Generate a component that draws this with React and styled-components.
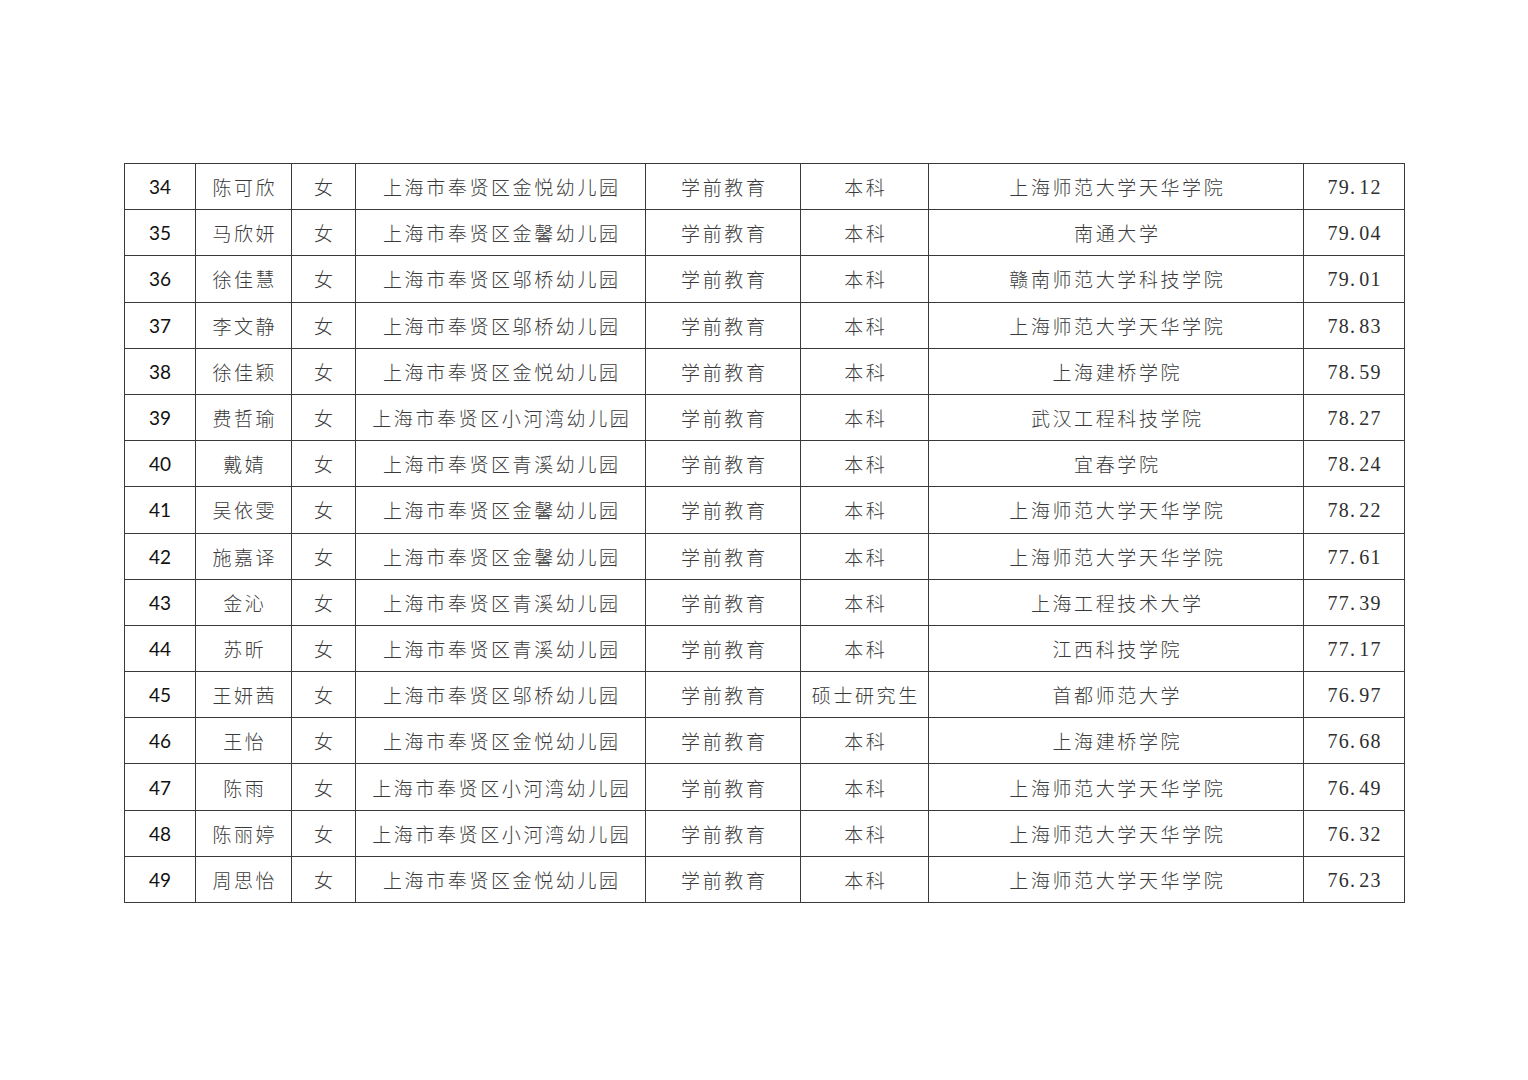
import React from "react";
import styled, { createGlobalStyle } from "styled-components";

const GlobalStyle = createGlobalStyle`
  html, body {
    margin: 0;
    padding: 0;
    background: #ffffff;
  }
`;

const rows = [
  ["34", "陈可欣", "女", "上海市奉贤区金悦幼儿园", "学前教育", "本科", "上海师范大学天华学院", "79.12"],
  ["35", "马欣妍", "女", "上海市奉贤区金馨幼儿园", "学前教育", "本科", "南通大学", "79.04"],
  ["36", "徐佳慧", "女", "上海市奉贤区邬桥幼儿园", "学前教育", "本科", "赣南师范大学科技学院", "79.01"],
  ["37", "李文静", "女", "上海市奉贤区邬桥幼儿园", "学前教育", "本科", "上海师范大学天华学院", "78.83"],
  ["38", "徐佳颖", "女", "上海市奉贤区金悦幼儿园", "学前教育", "本科", "上海建桥学院", "78.59"],
  ["39", "费哲瑜", "女", "上海市奉贤区小河湾幼儿园", "学前教育", "本科", "武汉工程科技学院", "78.27"],
  ["40", "戴婧", "女", "上海市奉贤区青溪幼儿园", "学前教育", "本科", "宜春学院", "78.24"],
  ["41", "吴依雯", "女", "上海市奉贤区金馨幼儿园", "学前教育", "本科", "上海师范大学天华学院", "78.22"],
  ["42", "施嘉译", "女", "上海市奉贤区金馨幼儿园", "学前教育", "本科", "上海师范大学天华学院", "77.61"],
  ["43", "金沁", "女", "上海市奉贤区青溪幼儿园", "学前教育", "本科", "上海工程技术大学", "77.39"],
  ["44", "苏昕", "女", "上海市奉贤区青溪幼儿园", "学前教育", "本科", "江西科技学院", "77.17"],
  ["45", "王妍茜", "女", "上海市奉贤区邬桥幼儿园", "学前教育", "硕士研究生", "首都师范大学", "76.97"],
  ["46", "王怡", "女", "上海市奉贤区金悦幼儿园", "学前教育", "本科", "上海建桥学院", "76.68"],
  ["47", "陈雨", "女", "上海市奉贤区小河湾幼儿园", "学前教育", "本科", "上海师范大学天华学院", "76.49"],
  ["48", "陈丽婷", "女", "上海市奉贤区小河湾幼儿园", "学前教育", "本科", "上海师范大学天华学院", "76.32"],
  ["49", "周思怡", "女", "上海市奉贤区金悦幼儿园", "学前教育", "本科", "上海师范大学天华学院", "76.23"],
];

const widths = [71, 96, 64, 290, 155, 128, 375, 101];

const Page = styled.div`
  width: 1528px;
  height: 1080px;
  box-sizing: border-box;
  padding: 163px 0 0 124px;
  background: #fff;
`;

const Table = styled.table`
  border-collapse: collapse;
  table-layout: fixed;
  width: 1281px;
  border: 1.3px solid #3a3a3a;
`;

const Row = styled.tr`
  height: 46.2px;
`;

const Cell = styled.td`
  border: 1.3px solid #3a3a3a;
  padding: 0;
  text-align: center;
  vertical-align: middle;
  white-space: nowrap;
  color: #3a3a3a;
  font-family: "Noto Sans CJK SC", "Noto Sans CJK JP", sans-serif;
  font-weight: 300;
  font-size: 19px;
  letter-spacing: 2.6px;
  text-indent: 2.6px;
`;

const IndexCell = styled(Cell)`
  font-family: "Lato", "Open Sans", sans-serif;
  font-weight: 400;
  font-size: 19px;
  color: #111;
  letter-spacing: 0;
  text-indent: 0;
`;

const ScoreCell = styled(Cell)`
  font-family: "Liberation Serif", "DejaVu Serif", serif;
  font-weight: 400;
  font-size: 20px;
  letter-spacing: 1.2px;
  text-indent: 1.2px;
  color: #2f2f2f;
  padding-top: 2px;
`;

const Dot = styled.span`
  margin-right: 3px;
`;

const Score = ({ value }) => {
  const [a, b] = value.split(".");
  return (
    <>
      {a}
      <Dot>.</Dot>
      {b}
    </>
  );
};

export default function App() {
  return (
    <>
      <GlobalStyle />
      <Page>
        <Table>
          <colgroup>
            {widths.map((w, i) => (
              <col key={i} style={{ width: w }} />
            ))}
          </colgroup>
          <tbody>
            {rows.map((r) => (
              <Row key={r[0]}>
                <IndexCell>{r[0]}</IndexCell>
                <Cell>{r[1]}</Cell>
                <Cell>{r[2]}</Cell>
                <Cell>{r[3]}</Cell>
                <Cell>{r[4]}</Cell>
                <Cell>{r[5]}</Cell>
                <Cell>{r[6]}</Cell>
                <ScoreCell>
                  <Score value={r[7]} />
                </ScoreCell>
              </Row>
            ))}
          </tbody>
        </Table>
      </Page>
    </>
  );
}
